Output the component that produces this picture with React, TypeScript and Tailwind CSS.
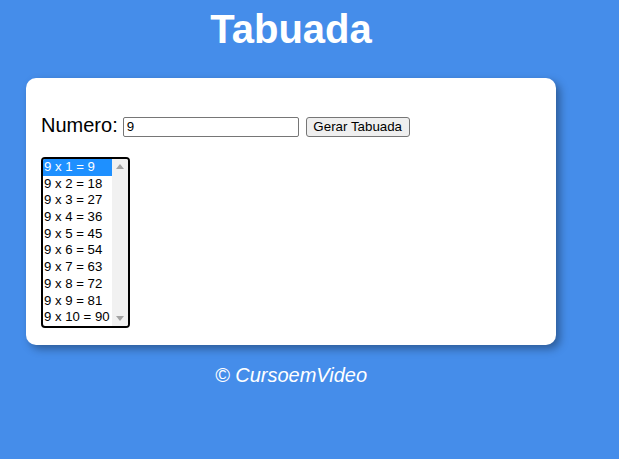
export default function App() {
  const rows = Array.from({ length: 10 }, (_, i) => `9 x ${i + 1} = ${9 * (i + 1)}`)

  return (
    <div className="min-h-[459px] w-full bg-[#458dea] font-['Liberation_Sans',Arial,sans-serif]">
      <div className="w-[582px] flex flex-col items-center">
        <h1 className="mt-[6px] h-[46px] text-[40px] leading-[46px] font-bold text-white">Tabuada</h1>

        <div className="mt-[26px] w-[530px] h-[267px] bg-white rounded-[10px] shadow-[4px_4px_8px_rgba(0,0,0,0.35)] pt-[37px] pl-[15px]">
          <div className="flex items-start">
            <span className="text-[20px] leading-[20px] text-black">Numero:</span>
            <div className="ml-[5px] mt-[2px] w-[176px] h-[20px] border border-[#767676] rounded-[2px] px-[3px] text-[13.33px] leading-[18px] text-black">
              9
            </div>
            <button className="ml-[7px] mt-[2px] w-[104px] h-[20px] border border-[#767676] rounded-[3px] bg-[#efefef] text-[13.33px] leading-[18px] text-black">
              Gerar Tabuada
            </button>
          </div>

          <div className="mt-[20px] w-[89px] h-[171px] border-2 border-black rounded-[4px] flex overflow-hidden">
            <div className="w-[69px] flex flex-col text-[13.2px] text-black">
              {rows.map((r, i) => (
                <div
                  key={r}
                  className={
                    i === 0
                      ? 'h-[16.7px] leading-[16.7px] pl-[1px] whitespace-nowrap bg-[#1e90ff] text-white'
                      : 'h-[16.7px] leading-[16.7px] pl-[1px] whitespace-nowrap'
                  }
                >
                  {r}
                </div>
              ))}
            </div>
            <div className="flex-1 bg-[#f1f1f1] flex flex-col items-center justify-between py-[5px]">
              <svg width="8" height="5" viewBox="0 0 8 5">
                <path d="M0 5 L4 0 L8 5 Z" fill="#a3a3a3" />
              </svg>
              <svg width="8" height="5" viewBox="0 0 8 5">
                <path d="M0 0 L4 5 L8 0 Z" fill="#a3a3a3" />
              </svg>
            </div>
          </div>
        </div>

        <p className="mt-[19px] text-[20px] leading-[23px] italic text-white">© CursoemVideo</p>
      </div>
    </div>
  )
}
